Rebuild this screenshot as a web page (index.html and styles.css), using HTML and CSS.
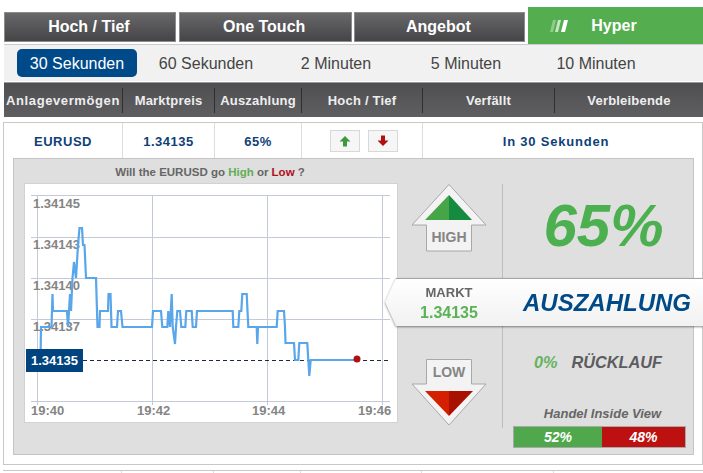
FILE: index.html
```html
<!DOCTYPE html>
<html lang="de">
<head>
<meta charset="utf-8">
<title>Hyper</title>
<link rel="stylesheet" href="styles.css">
</head>
<body>
<div class="app">
  <nav class="tabs">
    <div class="tab tab-a">Hoch / Tief</div>
    <div class="tab tab-b">One Touch</div>
    <div class="tab tab-c">Angebot</div>
    <div class="tab-hyper">
      <svg class="hyper-icon" width="18" height="12" viewBox="0 0 18 12"><polygon points="3,0 6,0 3,12 0,12" fill="#8fcc8a"/><polygon points="8,0 11,0 8,12 5,12" fill="#c5e6c2"/><polygon points="14,0 18,0 15,12 11,12" fill="#fff"/></svg>
      <span>Hyper</span>
    </div>
  </nav>
  <div class="durations">
    <div class="dur"><span class="pill">30 Sekunden</span></div>
    <div class="dur dur-text">60 Sekunden</div>
    <div class="dur dur-text">2 Minuten</div>
    <div class="dur dur-text">5 Minuten</div>
    <div class="dur dur-text">10 Minuten</div>
  </div>
  <div class="cols head">
    <div class="hc">Anlagevermögen</div>
    <div class="hc">Marktpreis</div>
    <div class="hc">Auszahlung</div>
    <div class="hc">Hoch / Tief</div>
    <div class="hc">Verfällt</div>
    <div class="hc">Verbleibende</div>
  </div>
  <section class="box">
    <div class="cols row">
      <div class="rc">EURUSD</div>
      <div class="rc">1.34135</div>
      <div class="rc">65%</div>
      <div class="rc btns">
        <span class="btn"><svg width="12" height="12" viewBox="0 0 12 12"><polygon points="6,1 11.5,6.5 8,6.5 8,11.5 4,11.5 4,6.5 0.5,6.5" fill="#3c9a3c"/></svg></span>
        <span class="btn"><svg width="12" height="12" viewBox="0 0 12 12"><polygon points="4,0.5 8,0.5 8,5.5 11.5,5.5 6,11 0.5,5.5 4,5.5" fill="#b01010"/></svg></span>
      </div>
      <div class="rc rc-wide">In 30 Sekunden</div>
    </div>
    <div class="panel">
      <div class="chart-col">
        <p class="question">Will the EURUSD go <span class="hi">High</span> or <span class="lo">Low</span> ?</p>
        <div class="chart">
          <svg class="chart-svg" width="372" height="238" viewBox="25 184 372 238">
            <g class="grid">
              <path d="M31 195.5H390M31 237.5H390M31 278.5H390M31 319.5H390M31 401.5H390"/>
              <path d="M37.5 195V405M152.5 195V405M267.5 195V405M382.5 195V405"/>
            </g>
            <g class="ylab">
              <text x="33" y="208">1.34145</text>
              <text x="33" y="249">1.34143</text>
              <text x="33" y="290">1.34140</text>
              <text x="33" y="331">1.34137</text>
            </g>
            <g class="xlab">
              <text x="31" y="415">19:40</text>
              <text x="137" y="415">19:42</text>
              <text x="252" y="415">19:44</text>
              <text x="358" y="415">19:46</text>
            </g>
            <path class="dash" d="M83 360.5H390"/>
            <polyline class="line" points="40.5,360 41,327 51.5,327 52.5,294 53,311 67,311 68,327 69,311 70,294 71,311 72.5,278 74,262 76,278 77,262 78,245 79.5,228 82,228 83,245 84.500,245 86,278 96,278 97.500,327 99.500,327 100,311 108,311 108.500,294 110.500,294 111.500,327 117,327 118,311 121,311 122.500,327 152,327 153,311 161,311 162.300,327 167.300,327 168.300,311 170,327 171.700,294 172.700,327 175,344 176,327 177.300,311 180,311 181.300,327 185.300,327 186.300,311 191.700,311 192.700,327 196,327 197,311 232.700,311 233.300,327 238.300,327 239.300,311 241.300,311 242.300,294 246.700,294 248.300,327 256.700,327 257.300,344 258,327 276.700,327 277.700,311 284,311 285,327 285.500,343 294,343 295,360 298.300,360 299.300,343 307.300,343 308.300,360 309.300,376 310.700,360 356.700,360"/>
            <circle class="dot" cx="357" cy="359" r="3.500"/>
          </svg>
          <div class="price-tag">1.34135</div>
        </div>
      </div>
      <div class="arrows">
        <svg width="76" height="68" viewBox="0 0 76 68">
          <polygon class="arrow-bg" points="38,0.500 75,41 60.500,41 60.500,67 15.500,67 15.500,41 1,41"/>
          <polygon points="38,11 38,36 14,36" fill="#46a546"/>
          <polygon points="38,11 61,36 38,36" fill="#168a3e"/>
          <text class="arrow-text" x="38" y="58">HIGH</text>
        </svg>
        <svg width="76" height="68" viewBox="0 0 76 68">
          <polygon class="arrow-bg" points="15.500,0.500 60.500,0.500 60.500,25 75,25 38,66 1,25 15.500,25"/>
          <polygon points="14,32 38,32 38,57" fill="#d42000"/>
          <polygon points="38,32 62,32 38,57" fill="#a81000"/>
          <text class="arrow-text" x="38" y="18">LOW</text>
        </svg>
      </div>
      <div class="side">
        <div class="big">65%</div>
        <div class="rebate"><span class="zero">0%</span><span class="rueck">RÜCKLAUF</span></div>
        <div class="inside">Handel Inside View</div>
        <div class="bar">
          <div class="bar-up">52%</div>
          <div class="bar-down">48%</div>
        </div>
      </div>
      <div class="ribbon">
        <div class="ribbon-body">
          <div class="markt">
            <div class="markt-l">MARKT</div>
            <div class="markt-v">1.34135</div>
          </div>
          <div class="ausz">AUSZAHLUNG</div>
        </div>
      </div>
    </div>
  </section>
  <div class="cols next">
    <div class="nc"></div><div class="nc"></div><div class="nc"></div><div class="nc"></div><div class="nc"></div><div class="nc"></div>
  </div>
</div>
</body>
</html>
```
FILE: styles.css
```css
* { box-sizing: border-box; }
html, body { margin: 0; padding: 0; background: #fff; }
body {
  font-family: "Liberation Sans", Arial, sans-serif;
  width: 703px;
  height: 473px;
  overflow: hidden;
}
.app { width: 703px; padding-left: 3px; }

.tabs { display: flex; align-items: flex-end; padding: 7px 0 0 1px; height: 44px; }
.tab {
  height: 30px;
  margin-bottom: 2px;
  display: flex;
  align-items: center;
  justify-content: center;
  color: #fff;
  font-size: 16px;
  font-weight: 700;
  background: linear-gradient(#68686b, #454547);
  border: 1px solid #8c8c8c;
}
.tab-a { width: 172px; margin-right: 3px; padding-right: 2px; }
.tab-b { width: 173px; margin-right: 2px; padding-right: 2px; }
.tab-c { width: 172px; margin-right: 3px; padding-right: 2px; }
.tab-hyper {
  width: 175px;
  height: 37px;
  background: #54ad4e;
  color: #fff;
  font-size: 16px;
  font-weight: 700;
  display: flex;
  align-items: center;
  padding-left: 22px;
  gap: 23px;
}
.hyper-icon { flex: none; }

.durations {
  margin-left: 1px;
  height: 37px;
  background: #f1f1f1;
  border-top: 1px solid #ccc;
  display: grid;
  grid-template-columns: 13px 120px 138px 122px 138px 122px;
  align-items: center;
  font-size: 16px;
  color: #444;
}
.dur:first-child { grid-column: 2; }
.dur { text-align: center; }
.dur-text { padding-top: 2px; }
.pill {
  display: block;
  width: 120px;
  height: 28px;
  line-height: 30px;
  background: #004a8a;
  color: #fff;
  border-radius: 5px;
}

.cols {
  display: grid;
  grid-template-columns: 119px 92px 87px 121px 132px 148px;
}
.head {
  margin: 1px 0 0 1px;
  height: 35px;
  background: linear-gradient(#4f4f52, #5f5f62);
  border-top: 1px solid #999;
  align-items: center;
}
.hc {
  height: 25px;
  line-height: 25px;
  text-align: center;
  color: #eee;
  font-size: 13px;
  font-weight: 700;
  letter-spacing: 0.2px;
  border-right: 1px solid #2f2f31;
  white-space: nowrap;
}
.hc:first-child { letter-spacing: 0.6px; }
.hc:last-child { border-right: 0; }

.box {
  margin-top: 5px;
  height: 343px;
  border: 1px solid #c8c8c8;
  padding-bottom: 10px;
}
.row { height: 35px; }
.rc {
  display: flex;
  align-items: center;
  justify-content: center;
  color: #0f3f7a;
  font-size: 13px;
  font-weight: 700;
  letter-spacing: 0.5px;
  padding-top: 1px;
  border-right: 1px solid #ddd;
}
.rc-wide {
  grid-column: 5 / 7;
  border-right: 0;
  letter-spacing: 0.8px;
  padding-right: 14px;
}
.btns { gap: 8px; padding: 0 0 0 3px; }
.btn {
  width: 30px;
  height: 22px;
  background: #f6f6f6;
  border: 1px solid #d8d8d8;
  display: flex;
  align-items: center;
  justify-content: center;
}

.panel {
  position: relative;
  margin-left: 9px;
  width: 681px;
  height: 297px;
  background: #dfdfdf;
  border: 1px solid #c4c4c4;
  display: flex;
}
.chart-col { width: 384px; padding-left: 11px; flex: none; }
.question {
  margin: 0;
  height: 25px;
  padding: 6px 3px 0 0;
  line-height: 14px;
  font-size: 11.5px;
  font-weight: 700;
  color: #666;
  text-align: center;
}
.hi { color: #5fae55; }
.lo { color: #b01020; }
.chart {
  position: relative;
  width: 372px;
  height: 238px;
  background: #fff;
  box-shadow: 0 0 0 1px #d2d2d2;
}
.chart-svg { display: block; }
.grid path { fill: none; stroke: #c3c9d6; stroke-width: 1; }
.ylab text, .xlab text {
  font-family: "Liberation Sans", Arial, sans-serif;
  font-size: 13px;
  font-weight: 700;
  fill: #858585;
}
.dash { stroke: #1a2a40; stroke-width: 1; stroke-dasharray: 4 3; fill: none; }
.line { fill: none; stroke: #5aa6ea; stroke-width: 2.2; stroke-linejoin: miter; }
.dot { fill: #b01010; }
.price-tag {
  position: absolute;
  left: 1px;
  top: 165px;
  width: 57px;
  height: 23px;
  line-height: 23px;
  background: #00437e;
  color: #fff;
  font-size: 13px;
  font-weight: 700;
  text-align: center;
}

.arrows {
  width: 105px;
  height: 244px;
  margin-top: 25px;
  padding: 0 0 1px 13px;
  border-right: 1px solid #bdbdbd;
  display: flex;
  flex-direction: column;
  justify-content: space-between;
  flex: none;
}
.arrow-bg { fill: #f3f3f3; stroke: #a8a8a8; stroke-width: 1; }
.arrow-text {
  font-family: "Liberation Sans", Arial, sans-serif;
  font-size: 14px;
  font-weight: 700;
  fill: #858585;
  text-anchor: middle;
}

.side { flex: 1; display: flex; flex-direction: column; align-items: center; min-width: 0; }
.big {
  margin-top: 32px;
  height: 70px;
  line-height: 70px;
  font-size: 60px;
  font-weight: 700;
  font-style: italic;
  color: #4caf50;
  padding-left: 11px;
}
.rebate {
  margin-top: 90px;
  height: 22px;
  line-height: 22px;
  font-size: 16.3px;
  font-weight: 700;
  font-style: italic;
  display: flex;
  gap: 14px;
}
.zero { color: #66b25e; }
.rueck { color: #5c5c60; }
.inside {
  margin-top: 33px;
  height: 16px;
  line-height: 16px;
  font-size: 13px;
  font-weight: 700;
  font-style: italic;
  color: #666;
  padding-left: 9px;
}
.bar {
  margin: 4px 0 0 3px;
  width: 173px;
  height: 22px;
  border: 1px solid #a8a8a8;
  display: flex;
  color: #fff;
  font-size: 14px;
  font-weight: 700;
  font-style: italic;
  text-align: center;
  line-height: 20px;
}
.bar-up { width: 88px; background: #4fa84c; }
.bar-down { flex: 1; background: #bd1010; }

.ribbon {
  position: absolute;
  left: 371px;
  top: 119px;
  width: 318px;
  height: 49px;
  filter: drop-shadow(0 1px 1px rgba(0,0,0,.45));
}
.ribbon-body {
  height: 48px;
  background: linear-gradient(#fff, #f1f1f1);
  border-top: 1px solid #a6a6a6;
  clip-path: polygon(11px 0, 100% 0, 100% 100%, 11px 100%, 0 50%);
  display: flex;
  align-items: center;
}
.markt { width: 128px; text-align: center; }
.markt-l { font-size: 13px; font-weight: 700; color: #666; line-height: 20px; }
.markt-v { font-size: 16px; font-weight: 700; color: #5bb356; line-height: 20px; }
.ausz {
  margin-left: 10px;
  font-size: 24px;
  font-weight: 700;
  font-style: italic;
  color: #004a88;
  white-space: nowrap;
}

.next { margin-top: 5px; height: 3px; border-top: 1px solid #c8c8c8; }
.nc { border-right: 1px solid #ddd; }
.nc:last-child { border-right: 0; }
```
